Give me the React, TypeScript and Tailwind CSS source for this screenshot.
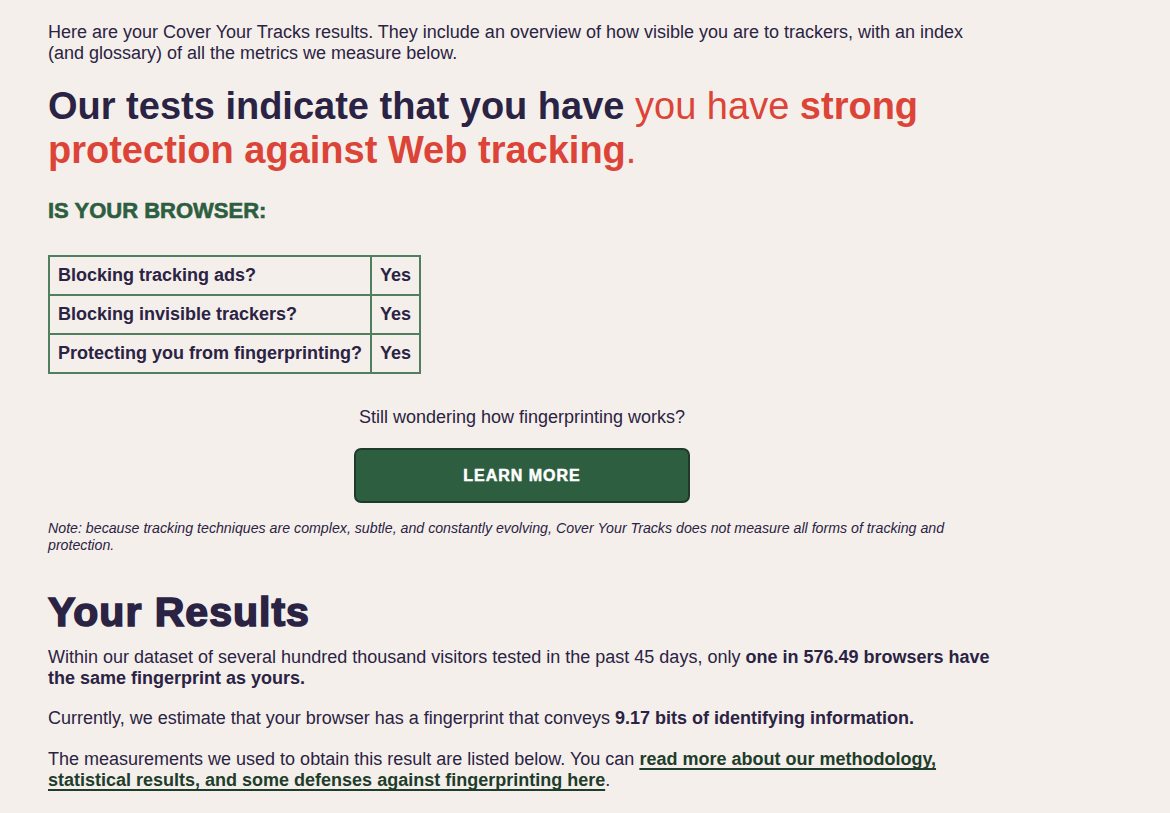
import React from "react";

const rows = [
  "Blocking tracking ads?",
  "Blocking invisible trackers?",
  "Protecting you from fingerprinting?",
];

export default function App() {
  return (
    <div className="min-h-screen w-full bg-[#f4efeb] text-[#2b2343] font-['Liberation_Sans',Arial,sans-serif]">
      <div className="w-[948px] pl-[48px] box-content pt-[22px] pb-[20px]">
        <p className="text-[18px] leading-[21px]">
          Here are your Cover Your Tracks results. They include an overview of how visible you are to trackers, with an index (and glossary) of all the metrics we measure below.
        </p>

        <h1 className="mt-[20px] text-[38px] leading-[44px] font-bold">
          Our tests indicate that you have{" "}
          <span className="text-[#dc4437] font-normal">you have </span>
          <span className="text-[#dc4437]">strong protection against Web tracking</span>
          <span className="text-[#dc4437] font-normal">.</span>
        </h1>

        <h2 className="mt-[26px] text-[22px] leading-[26px] font-bold text-[#2e5e40] uppercase [-webkit-text-stroke:0.6px_#2e5e40]">
          Is your browser:
        </h2>

        <table className="mt-[31px] border-collapse border-2 border-[#4f7f5f] text-[18px] leading-[21px] font-bold">
          <tbody>
            {rows.map((r) => (
              <tr key={r}>
                <td className="border-2 border-[#4f7f5f] pl-[8px] pr-[8px] py-[8px] h-[39px]">{r}</td>
                <td className="border-2 border-[#4f7f5f] px-[8px] py-[8px] h-[39px]">Yes</td>
              </tr>
            ))}
          </tbody>
        </table>

        <p className="mt-[33px] text-center text-[18px] leading-[21px]">
          Still wondering how fingerprinting works?
        </p>

        <div className="mt-[20px] flex justify-center">
          <button className="w-[336px] h-[55px] rounded-[7px] border-2 border-[#1f3a2a] bg-[#2e5e40] text-white text-[16px] font-bold tracking-[1px] uppercase [-webkit-text-stroke:0.5px_#ffffff]">
            Learn More
          </button>
        </div>

        <p className="mt-[17px] text-[14.2px] leading-[17px] italic">
          Note: because tracking techniques are complex, subtle, and constantly evolving, Cover Your Tracks does not measure all forms of tracking and protection.
        </p>

        <h2 className="mt-[34px] text-[41px] leading-[48px] font-bold tracking-[1px] [-webkit-text-stroke:1.6px_#2b2343]">
          Your Results
        </h2>

        <p className="mt-[11px] text-[18px] leading-[21px]">
          Within our dataset of several hundred thousand visitors tested in the past 45 days, only{" "}
          <b>one in 576.49 browsers have the same fingerprint as yours.</b>
        </p>

        <p className="mt-[19px] text-[18px] leading-[21px]">
          Currently, we estimate that your browser has a fingerprint that conveys{" "}
          <b>9.17 bits of identifying information.</b>
        </p>

        <p className="mt-[20px] text-[18px] leading-[21px]">
          The measurements we used to obtain this result are listed below. You can{" "}
          <a href="#" className="font-bold text-[#1e3d2a] underline decoration-[#1e3d2a] underline-offset-[3px] decoration-[1.5px] [text-decoration-skip-ink:none]">
            read more about our methodology, statistical results, and some defenses against fingerprinting here
          </a>
          .
        </p>
      </div>
    </div>
  );
}
